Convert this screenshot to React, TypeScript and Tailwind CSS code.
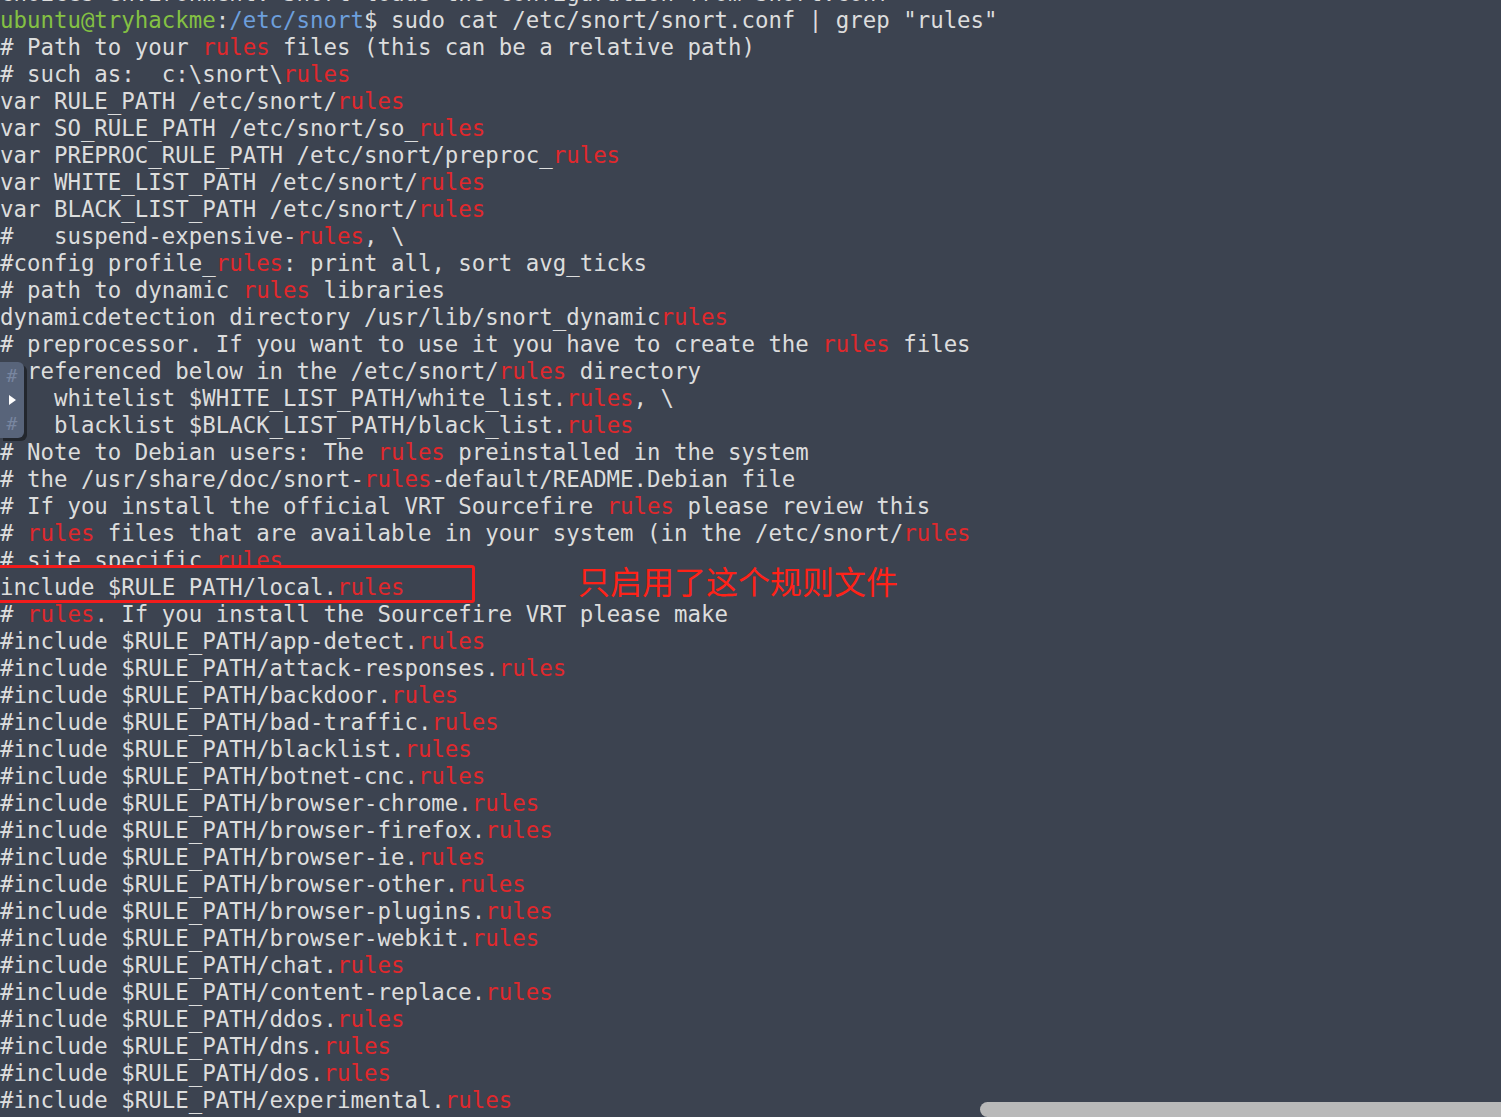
import React from "react";

const mono = { fontFamily: '"DejaVu Sans Mono", "Liberation Mono", monospace' };

const rulesFiles = [
  "app-detect",
  "attack-responses",
  "backdoor",
  "bad-traffic",
  "blacklist",
  "botnet-cnc",
  "browser-chrome",
  "browser-firefox",
  "browser-ie",
  "browser-other",
  "browser-plugins",
  "browser-webkit",
  "chat",
  "content-replace",
  "ddos",
  "dns",
  "dos",
  "experimental",
];

const before = [
  "# Path to your rules files (this can be a relative path)",
  "# such as:  c:\\snort\\rules",
  "var RULE_PATH /etc/snort/rules",
  "var SO_RULE_PATH /etc/snort/so_rules",
  "var PREPROC_RULE_PATH /etc/snort/preproc_rules",
  "var WHITE_LIST_PATH /etc/snort/rules",
  "var BLACK_LIST_PATH /etc/snort/rules",
  "#   suspend-expensive-rules, \\",
  "#config profile_rules: print all, sort avg_ticks",
  "# path to dynamic rules libraries",
  "dynamicdetection directory /usr/lib/snort_dynamicrules",
  "# preprocessor. If you want to use it you have to create the rules files",
  "# referenced below in the /etc/snort/rules directory",
  "#   whitelist $WHITE_LIST_PATH/white_list.rules, \\",
  "#   blacklist $BLACK_LIST_PATH/black_list.rules",
  "# Note to Debian users: The rules preinstalled in the system",
  "# the /usr/share/doc/snort-rules-default/README.Debian file",
  "# If you install the official VRT Sourcefire rules please review this",
  "# rules files that are available in your system (in the /etc/snort/rules",
];

function Highlight({ text }: { text: string }) {
  const parts = text.split("rules");
  return (
    <>
      {parts.map((p, i) => (
        <React.Fragment key={i}>
          {p}
          {i < parts.length - 1 && <span className="text-[#e0282c]">rules</span>}
        </React.Fragment>
      ))}
    </>
  );
}

function Line({ text }: { text: string }) {
  return (
    <div className="h-[27px] whitespace-pre">
      <Highlight text={text} />
    </div>
  );
}

export default function App() {
  return (
    <div className="relative h-[1117px] w-[1501px] overflow-hidden bg-[#3c4350] text-[22.4px] leading-[27px] text-[#dcdddd]" style={mono}>
      <div className="-mt-[20px] flex flex-col">
        <div className="h-[27px] whitespace-pre">choices environment. Snort loads the configuration from snort.conf</div>
        <div className="h-[27px] whitespace-pre">
          <span className="text-[#84c143]">ubuntu@tryhackme</span>
          <span>:</span>
          <span className="text-[#6d9fdc]">/etc/snort</span>
          <span>$ sudo cat /etc/snort/snort.conf | grep "rules"</span>
        </div>
        {before.map((t, i) => (
          <Line key={i} text={t} />
        ))}
        <div className="h-[27px]">
          <div className="h-[19px] overflow-hidden whitespace-pre">
            <Highlight text="# site specific rules" />
          </div>
        </div>
        <div className="relative h-[27px] whitespace-pre">
          <Highlight text="include $RULE_PATH/local.rules" />
          <div className="absolute -left-[3px] -top-[9px] h-[38px] w-[478px] rounded-[3px] border-[3px] border-[#f21c1c]" />
          <div
            className="absolute left-[578px] -top-[12px] text-[32px] leading-[36px] text-[#ff2218]"
            style={{ fontFamily: '"Noto Sans CJK SC", "Noto Sans", sans-serif' }}
          >
            只启用了这个规则文件
          </div>
        </div>
        <Line text="# rules. If you install the Sourcefire VRT please make" />
        {rulesFiles.map((f) => (
          <Line key={f} text={`#include $RULE_PATH/${f}.rules`} />
        ))}
      </div>

      {/* side widget */}
      <div className="absolute left-0 top-[362px] flex h-[76px] w-[24px] flex-col items-center justify-between rounded-r-[6px] bg-[#58647a] py-[4px] shadow-[3px_3px_0_#23272e]">
        <span className="text-[18px] leading-[20px] text-[#7886a0]">#</span>
        <svg width="10" height="12" viewBox="0 0 10 12">
          <path d="M2 1 L9 6 L2 11 Z" fill="#ffffff" />
        </svg>
        <span className="text-[18px] leading-[20px] text-[#7886a0]">#</span>
      </div>

      {/* horizontal scrollbar */}
      <div className="absolute bottom-0 left-[980px] h-[15px] w-[521px] rounded-l-[8px] bg-[#b9b9b9]" />
    </div>
  );
}
